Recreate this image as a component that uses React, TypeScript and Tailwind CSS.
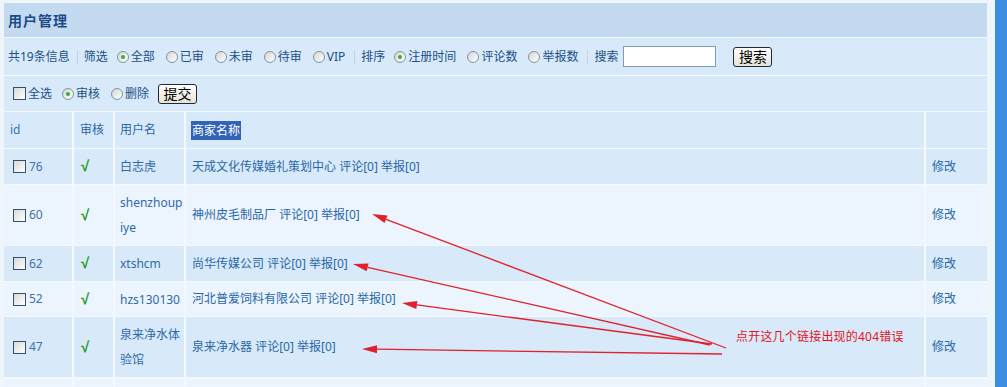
import React from "react";

const FONT = "font-['Noto_Sans','Noto_Sans_CJK_SC',sans-serif]";

function Radio({ checked }: { checked?: boolean }) {
  return (
    <span className="inline-flex w-[12px] h-[12px] shrink-0 items-center justify-center rounded-full border border-[#7d93a8] bg-linear-to-br from-[#d6d6d2] to-white">
      {checked ? <span className="block w-[4px] h-[4px] rounded-full bg-[#3fa83a]" /> : null}
    </span>
  );
}

function Check() {
  return (
    <span className="inline-block w-[13px] h-[13px] shrink-0 border border-[#34506c] bg-linear-to-br from-[#d9d9d4] to-white" />
  );
}

function Sep() {
  return <span className="inline-block w-px h-[14px] bg-[#bcd3ea]" />;
}

function Btn({ label, w }: { label: string; w: string }) {
  return (
    <span
      className={`inline-flex ${w} h-[20px] items-center justify-center rounded-[3px] border border-[#1f2a36] bg-linear-to-b from-white to-[#e6e3d6] text-[14px] leading-none text-black`}
    >
      {label}
    </span>
  );
}

function RadioItem({ checked, label }: { checked?: boolean; label: string }) {
  return (
    <span className="inline-flex items-center gap-[2px]">
      <Radio checked={checked} />
      <span>{label}</span>
    </span>
  );
}

const GRID = "grid shrink-0 grid-cols-[68px_39px_69px_738px_61px] gap-x-[2px]";

type Row = { id: string; user: string[]; name: string; h: string; dark: boolean };

const rows: Row[] = [
  { id: "76", user: ["白志虎"], name: "天成文化传媒婚礼策划中心", h: "h-[35px]", dark: true },
  { id: "60", user: ["shenzhoup", "iye"], name: "神州皮毛制品厂", h: "h-[60px]", dark: false },
  { id: "62", user: ["xtshcm"], name: "尚华传媒公司", h: "h-[35px]", dark: true },
  { id: "52", user: ["hzs130130"], name: "河北普爱饲料有限公司", h: "h-[34px]", dark: false },
  { id: "47", user: ["泉来净水体", "验馆"], name: "泉来净水器", h: "h-[60px]", dark: true },
];

function arrowHead(tx: number, ty: number, sx: number, sy: number) {
  const dx = sx - tx;
  const dy = sy - ty;
  const len = Math.hypot(dx, dy);
  const ux = dx / len;
  const uy = dy / len;
  const L = 15;
  const W = 4;
  const bx = tx + ux * L;
  const by = ty + uy * L;
  const px = -uy;
  const py = ux;
  return {
    pts: `${tx},${ty} ${bx + px * W},${by + py * W} ${bx - px * W},${by - py * W}`,
    bx,
    by,
  };
}

const arrows = [
  { tip: [372, 214], tail: [726, 348] },
  { tip: [353, 264], tail: [710, 345] },
  { tip: [402, 303], tail: [712, 344] },
  { tip: [362, 349], tail: [722, 354] },
];

export default function App() {
  return (
    <div className={`relative w-[1007px] h-[387px] overflow-hidden bg-[#eef6fc] ${FONT} text-[12px]`}>
      <div className="flex h-full">
        <div className="ml-[4px] mt-[3px] w-[983px] self-start flex flex-col gap-y-[1px] bg-[#f3f9fe]">
          {/* title */}
          <div className="h-[34px] shrink-0 flex items-center pl-[4px] bg-[#c4daf0]">
            <span className="text-[14px] font-bold text-[#1b4b85] tracking-[1px]">用户管理</span>
          </div>
          {/* filter row */}
          <div className="h-[37px] shrink-0 flex items-center pl-[4px] bg-[#d8eaf9] text-[#214f86]">
            <span>共19条信息</span>
            <span className="ml-[7px] flex"><Sep /></span>
            <span className="ml-[6px]">筛选</span>
            <span className="ml-[9px] flex items-center gap-[11px]">
              <RadioItem checked label="全部" />
              <RadioItem label="已审" />
              <RadioItem label="未审" />
              <RadioItem label="待审" />
              <RadioItem label="VIP" />
            </span>
            <span className="ml-[9px] flex"><Sep /></span>
            <span className="ml-[6px]">排序</span>
            <span className="ml-[9px] flex items-center gap-[11px]">
              <RadioItem checked label="注册时间" />
              <RadioItem label="评论数" />
              <RadioItem label="举报数" />
            </span>
            <span className="ml-[9px] flex"><Sep /></span>
            <span className="ml-[6px]">搜索</span>
            <span className="ml-[5px] inline-block w-[93px] h-[21px] border border-[#7f9db9] bg-white" />
            <span className="ml-[17px] flex"><Btn label="搜索" w="w-[39px]" /></span>
          </div>
          {/* action row */}
          <div className="h-[35px] shrink-0 flex items-center pl-[9px] bg-[#d8eaf9] text-[#214f86]">
            <span className="inline-flex items-center gap-[2px]">
              <Check />
              <span>全选</span>
            </span>
            <span className="ml-[10px] flex items-center gap-[11px]">
              <RadioItem checked label="审核" />
              <RadioItem label="删除" />
            </span>
            <span className="ml-[9px] flex"><Btn label="提交" w="w-[39px]" /></span>
          </div>
          {/* table header */}
          <div className={`${GRID} h-[36px]`}>
            <div className="bg-[#d8eaf9] flex items-center pl-[6px] text-[#3d72b0]">id</div>
            <div className="bg-[#d8eaf9] flex items-center pl-[6px] text-[#2d64a4]">审核</div>
            <div className="bg-[#d8eaf9] flex items-center pl-[5px] text-[#2d64a4]">用户名</div>
            <div className="bg-[#d8eaf9] flex items-center pl-[5px]">
              <span className="bg-[#3164b6] text-white leading-[19px] px-[1px]">商家名称</span>
            </div>
            <div className="bg-[#d8eaf9]" />
          </div>
          {rows.map((r) => {
            const bg = r.dark ? "bg-[#d8eaf9]" : "bg-[#ecf5fd]";
            return (
              <div key={r.id} className={`${GRID} ${r.h}`}>
                <div className={`${bg} flex items-center pl-[9px] gap-[3px] text-[#3f72aa]`}>
                  <Check />
                  <span>{r.id}</span>
                </div>
                <div className={`${bg} flex items-center pl-[7px]`}>
                  <span className="font-['Liberation_Sans','DejaVu_Sans',sans-serif] text-[15px] font-bold text-[#1d9a26]">√</span>
                </div>
                <div className={`${bg} flex flex-col justify-center pl-[5px] text-[#2f6aa9] leading-[25px]`}>
                  {r.user.map((u) => (
                    <span key={u}>{u}</span>
                  ))}
                </div>
                <div className={`${bg} flex items-center pl-[6px] text-[#2a67a8]`}>
                  {r.name} 评论[0] 举报[0]
                </div>
                <div className={`${bg} flex items-center pl-[6px] text-[#2a67a8]`}>修改</div>
              </div>
            );
          })}
          <div className={`${GRID} h-[30px] mt-[1px]`}>
            <div className="bg-[#ecf5fd]" />
            <div className="bg-[#ecf5fd]" />
            <div className="bg-[#ecf5fd]" />
            <div className="bg-[#ecf5fd]" />
            <div className="bg-[#ecf5fd]" />
          </div>
        </div>
        <div className="ml-[8px] w-[12px] h-full bg-[#3a8ee4]" />
      </div>

      {/* annotation overlay */}
      <svg className="absolute left-0 top-0 pointer-events-none" width="1007" height="387" viewBox="0 0 1007 387">
        {arrows.map((a, i) => {
          const h = arrowHead(a.tip[0], a.tip[1], a.tail[0], a.tail[1]);
          return (
            <g key={i}>
              <line x1={h.bx} y1={h.by} x2={a.tail[0]} y2={a.tail[1]} stroke="#e0202a" strokeWidth="1.3" />
              <polygon points={h.pts} fill="#e0202a" />
            </g>
          );
        })}
      </svg>
      <div className="absolute left-[736px] top-[329px] text-[12px] leading-[16px] tracking-[0.2px] text-[#e3141e]">
        点开这几个链接出现的404错误
      </div>
    </div>
  );
}
